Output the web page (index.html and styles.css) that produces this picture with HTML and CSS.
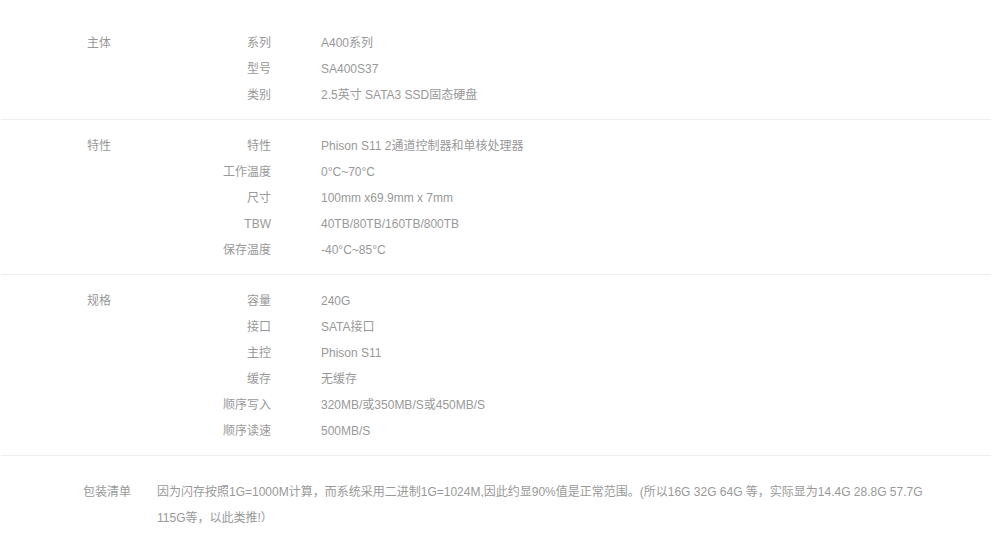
FILE: index.html
```html
<!DOCTYPE html>
<html lang="zh-CN">
<head>
    <meta charset="UTF-8">
    <meta name="viewport" content="width=device-width, initial-scale=1.0">
    <title>规格参数</title>
    <link rel="stylesheet" href="styles.css">
</head>
<body>
    <div class="spec">
        <div class="group">
            <div class="group-title">主体</div>
            <dl class="rows">
                <dt>系列</dt><dd>A400系列</dd>
                <dt>型号</dt><dd>SA400S37</dd>
                <dt>类别</dt><dd>2.5英寸 SATA3 SSD固态硬盘</dd>
            </dl>
        </div>

        <div class="group">
            <div class="group-title">特性</div>
            <dl class="rows">
                <dt>特性</dt><dd>Phison S11 2通道控制器和单核处理器</dd>
                <dt>工作温度</dt><dd>0°C~70°C</dd>
                <dt>尺寸</dt><dd>100mm x69.9mm x 7mm</dd>
                <dt>TBW</dt><dd>40TB/80TB/160TB/800TB</dd>
                <dt>保存温度</dt><dd>-40°C~85°C</dd>
            </dl>
        </div>

        <div class="group">
            <div class="group-title">规格</div>
            <dl class="rows">
                <dt>容量</dt><dd>240G</dd>
                <dt>接口</dt><dd>SATA接口</dd>
                <dt>主控</dt><dd>Phison S11</dd>
                <dt>缓存</dt><dd>无缓存</dd>
                <dt>顺序写入</dt><dd>320MB/或350MB/S或450MB/S</dd>
                <dt>顺序读速</dt><dd>500MB/S</dd>
            </dl>
        </div>

        <div class="package">
            <div class="package-title">包装清单</div>
            <p class="package-text">因为闪存按照1G=1000M计算，而系统采用二进制1G=1024M,因此约显90%值是正常范围。(所以16G 32G 64G 等，实际显为14.4G 28.8G 57.7G 115G等，以此类推!）</p>
        </div>
    </div>
</body>
</html>
```

FILE: styles.css
```css
body {
    margin: 0;
    font-family: "Liberation Sans", "Noto Sans CJK SC", sans-serif;
    font-size: 12px;
    color: #999;
    background: #fff;
}
.spec {
    padding: 17px 1px 0;
}
.group {
    display: flex;
    padding: 13px 0 11px;
    border-bottom: 1px solid #eee;
}
.group-title {
    width: 100px;
    padding-left: 86px;
    line-height: 26px;
}
.rows {
    display: grid;
    grid-template-columns: 84px 1fr;
    column-gap: 50px;
    margin: 0;
    line-height: 26px;
}
.rows dt {
    text-align: right;
}
.rows dd {
    margin: 0;
}
.package {
    display: flex;
    padding-top: 23px;
    line-height: 26px;
}
.package-title {
    width: 74px;
    padding-left: 82px;
    flex-shrink: 0;
}
.package-text {
    margin: 0;
    width: 775px;
}
```
